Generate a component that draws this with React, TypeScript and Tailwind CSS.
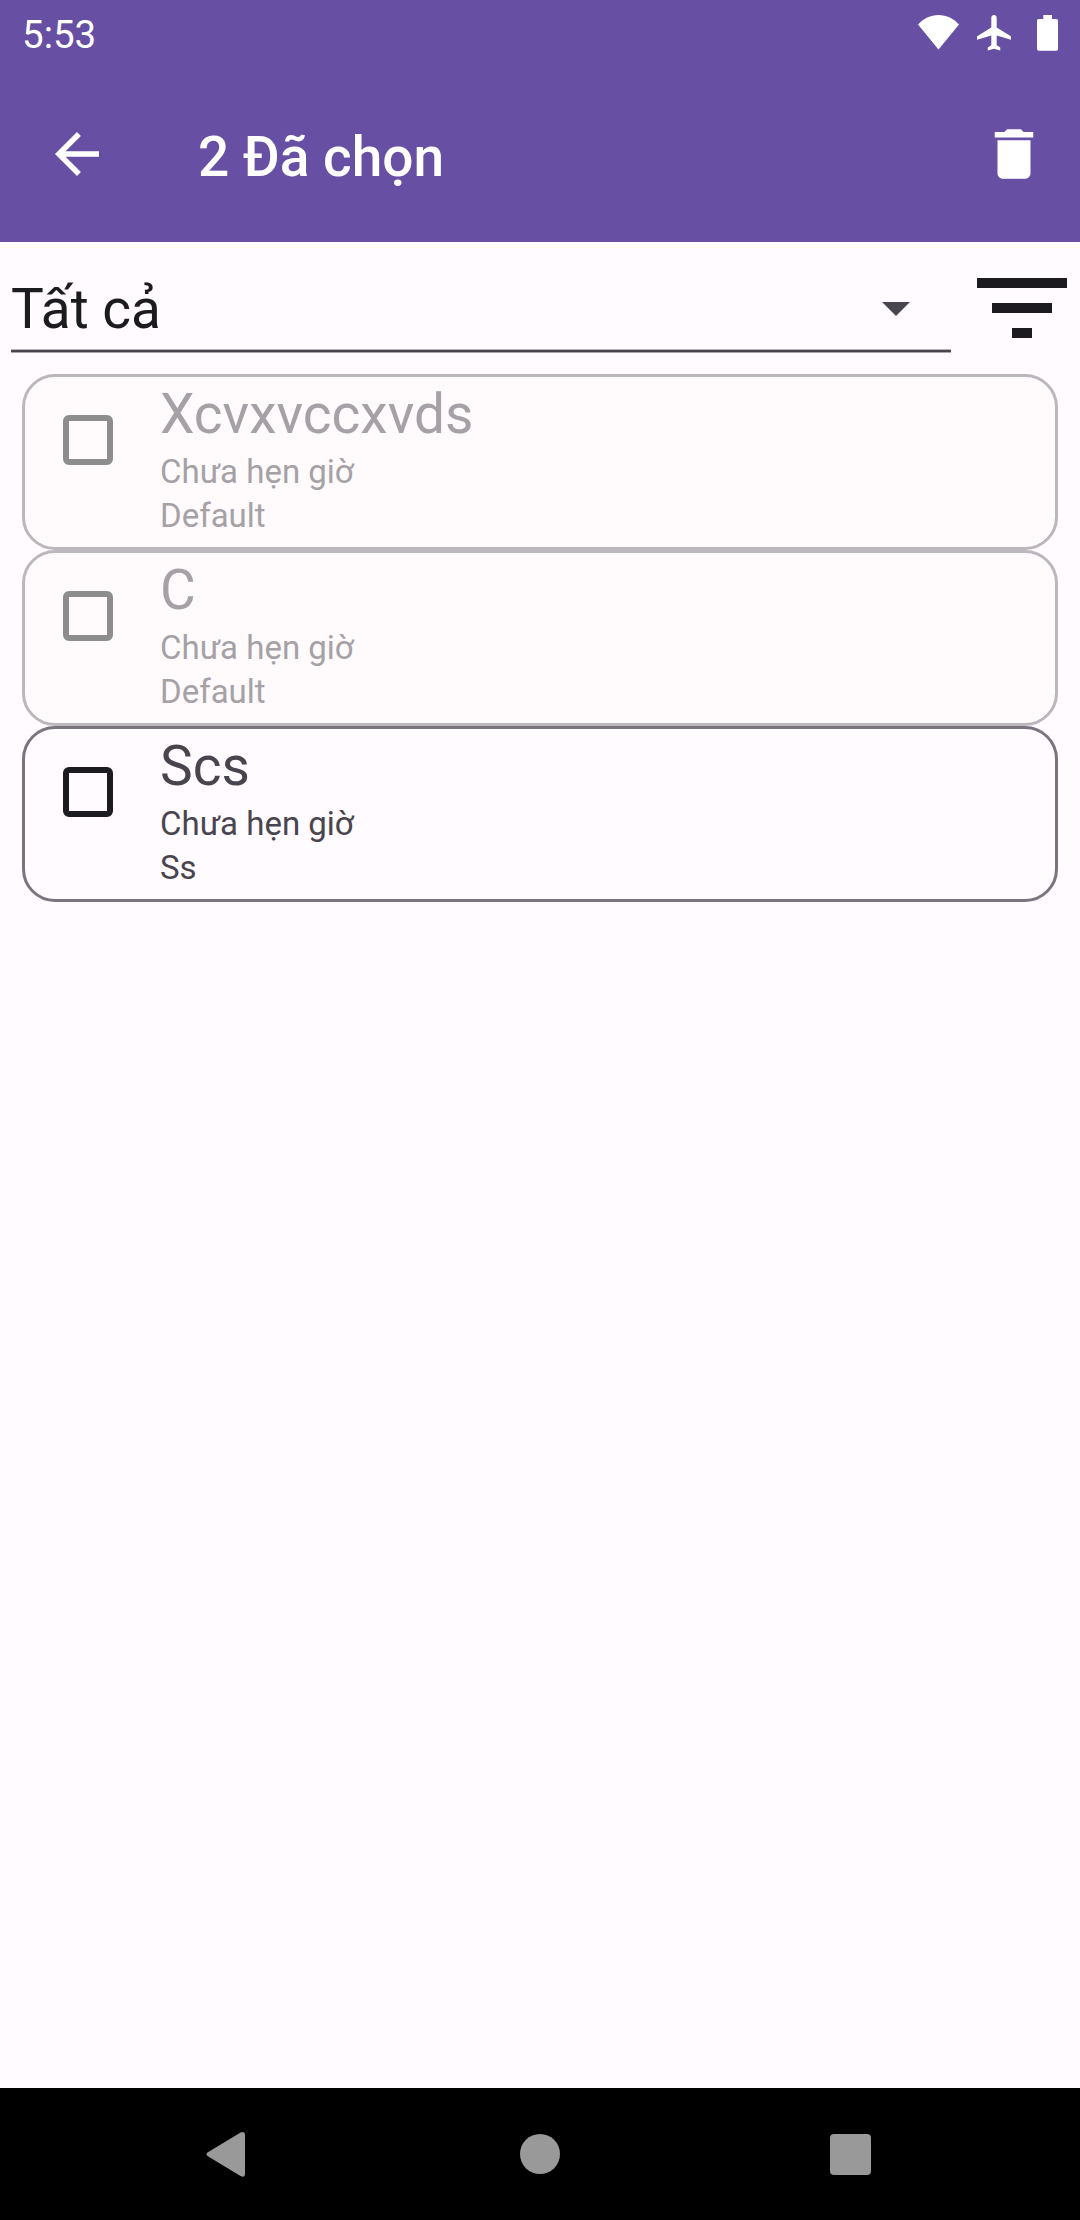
type Alarm = { title: string; schedule: string; group: string; muted: boolean };

const alarms: Alarm[] = [
  { title: "Xcvxvccxvds", schedule: "Chưa hẹn giờ", group: "Default", muted: true },
  { title: "C", schedule: "Chưa hẹn giờ", group: "Default", muted: true },
  { title: "Scs", schedule: "Chưa hẹn giờ", group: "Ss", muted: false },
];

function StatusBar() {
  return (
    <div className="flex h-[66px] items-start justify-between pl-[22px] pr-[22px]">
      <span className="pt-[12px] text-[38.5px] leading-[45px]">5:53</span>
      <div className="flex pt-[15px]">
        <svg className="mr-[18px] h-[35px] w-[41px]" viewBox="0 0 41 35" fill="currentColor">
          <path d="M0 9.6C5.200 3.600 12.500 0 20.500 0S35.800 3.600 41 9.600L20.500 34.500z" />
        </svg>
        <svg className="mr-[26px] h-[35.500px] w-[34px]" viewBox="2 2 19 20" preserveAspectRatio="none" fill="currentColor">
          <path d="M21 16v-1.700q0-.3-.3-.5L13 9V3.500c0-.83-.67-1.500-1.500-1.500S10 2.670 10 3.500V9l-7.700 4.800q-.3.200-.3.500V16l8-2.500V19l-1.800 1.200q-.2.150-.2.400V22l3.500-1 3.500 1v-1.400q0-.25-.2-.4L13 19v-5.500l8 2.500z" />
        </svg>
        <svg className="h-[36px] w-[21px]" viewBox="0 0 21 36" fill="currentColor">
          <path d="M6.300 0h8.700v4H19.500Q21 4 21 5.500V34Q21 35.700 19.300 35.700H1.700Q0 35.700 0 34V5.500Q0 4 1.500 4H6.300z" />
        </svg>
      </div>
    </div>
  );
}

function Toolbar() {
  return (
    <div className="flex h-[176px] items-center pl-[44px] pr-[33px]">
      <svg className="h-[66px] w-[66px] shrink-0" viewBox="0 0 24 24" fill="currentColor">
        <path d="M20 11H7.830l5.590-5.590L12 4l-8 8 8 8 1.410-1.410L7.830 13H20v-2z" />
      </svg>
      <h1 className="ml-[88px] flex-1 pt-[5px] text-[55px] font-medium leading-[64px]">2 Đã chọn</h1>
      <svg className="h-[66px] w-[66px] shrink-0" viewBox="0 0 24 24" fill="currentColor">
        <path d="M6 19c0 1.100.9 2 2 2h8c1.100 0 2-.9 2-2V7H6v12zM19 4h-3.500l-1-1h-5l-1 1H5v2h14V4z" />
      </svg>
    </div>
  );
}

function FilterRow() {
  return (
    <div className="flex h-[132px] pl-[11px]">
      <div className="flex h-[110px] w-[940px] items-start justify-between border-b-2 border-[#49454f] pr-[41px] shadow-[0_1px_0_#a9a6ad,inset_0_-1px_0_#b9b6bc]">
        <span className="pt-[35px] text-[55px] leading-[64px] text-[#1c1b1f]">Tất cả</span>
        <svg className="mt-[60px] h-[14px] w-[28px]" viewBox="0 0 28 14" fill="#49454f">
          <path d="M0 0h28L14 14z" />
        </svg>
      </div>
      <svg className="ml-[25.500px] mt-[36px] h-[60px] w-[90px]" viewBox="3 6 18 12" fill="#1c1b1f">
        <path d="M10 18h4v-2h-4v2zM3 6v2h18V6H3zm3 7h12v-2H6v2z" />
      </svg>
    </div>
  );
}

function AlarmCard({ alarm }: { alarm: Alarm }) {
  const card = alarm.muted
    ? "border-[#bcb7bd] bg-[#fffbfc] text-[#a5a1a6]"
    : "border-[#79747e] bg-[#fffbfe] text-[#49454f]";
  const box = alarm.muted ? "border-[#8d8d8e]" : "border-[#1c1b1f]";
  return (
    <li className={`flex h-[176px] rounded-[33px] border-3 ${card}`}>
      <span className={`ml-[38px] mt-[38px] h-[50px] w-[50px] rounded-[6px] border-6 ${box}`} />
      <div className="ml-[47px]">
        <p className="pt-[2px] text-[55px] leading-[71px]">{alarm.title}</p>
        <p className="text-[33px] leading-[44px]">{alarm.schedule}</p>
        <p className="text-[33px] leading-[44px]">{alarm.group}</p>
      </div>
    </li>
  );
}

function NavigationBar() {
  return (
    <nav className="flex h-[132px] items-center bg-black pl-[206px] text-[#999999]">
      <svg className="h-[46px] w-[39px]" viewBox="0 0 39 46" fill="currentColor">
        <path d="M1.500 21.600 34.500 1.600Q39 -.5 39 3.500V43Q39 47 34.500 45L1.500 25Q-.6 23.300 1.500 21.600z" />
      </svg>
      <span className="ml-[275px] h-[40px] w-[40px] rounded-full bg-current" />
      <span className="ml-[270px] mt-px h-[41px] w-[41px] rounded-[4px] bg-current" />
    </nav>
  );
}

export default function App() {
  return (
    <div className="flex h-[2220px] w-[1080px] flex-col overflow-hidden bg-[#fffbfe] font-['Roboto',sans-serif]">
      <header className="bg-[#6750a4] text-white">
        <StatusBar />
        <Toolbar />
      </header>
      <main className="flex-1">
        <FilterRow />
        <ul className="px-[22px]">
          {alarms.map((alarm) => (
            <AlarmCard key={alarm.title} alarm={alarm} />
          ))}
        </ul>
      </main>
      <NavigationBar />
    </div>
  );
}
